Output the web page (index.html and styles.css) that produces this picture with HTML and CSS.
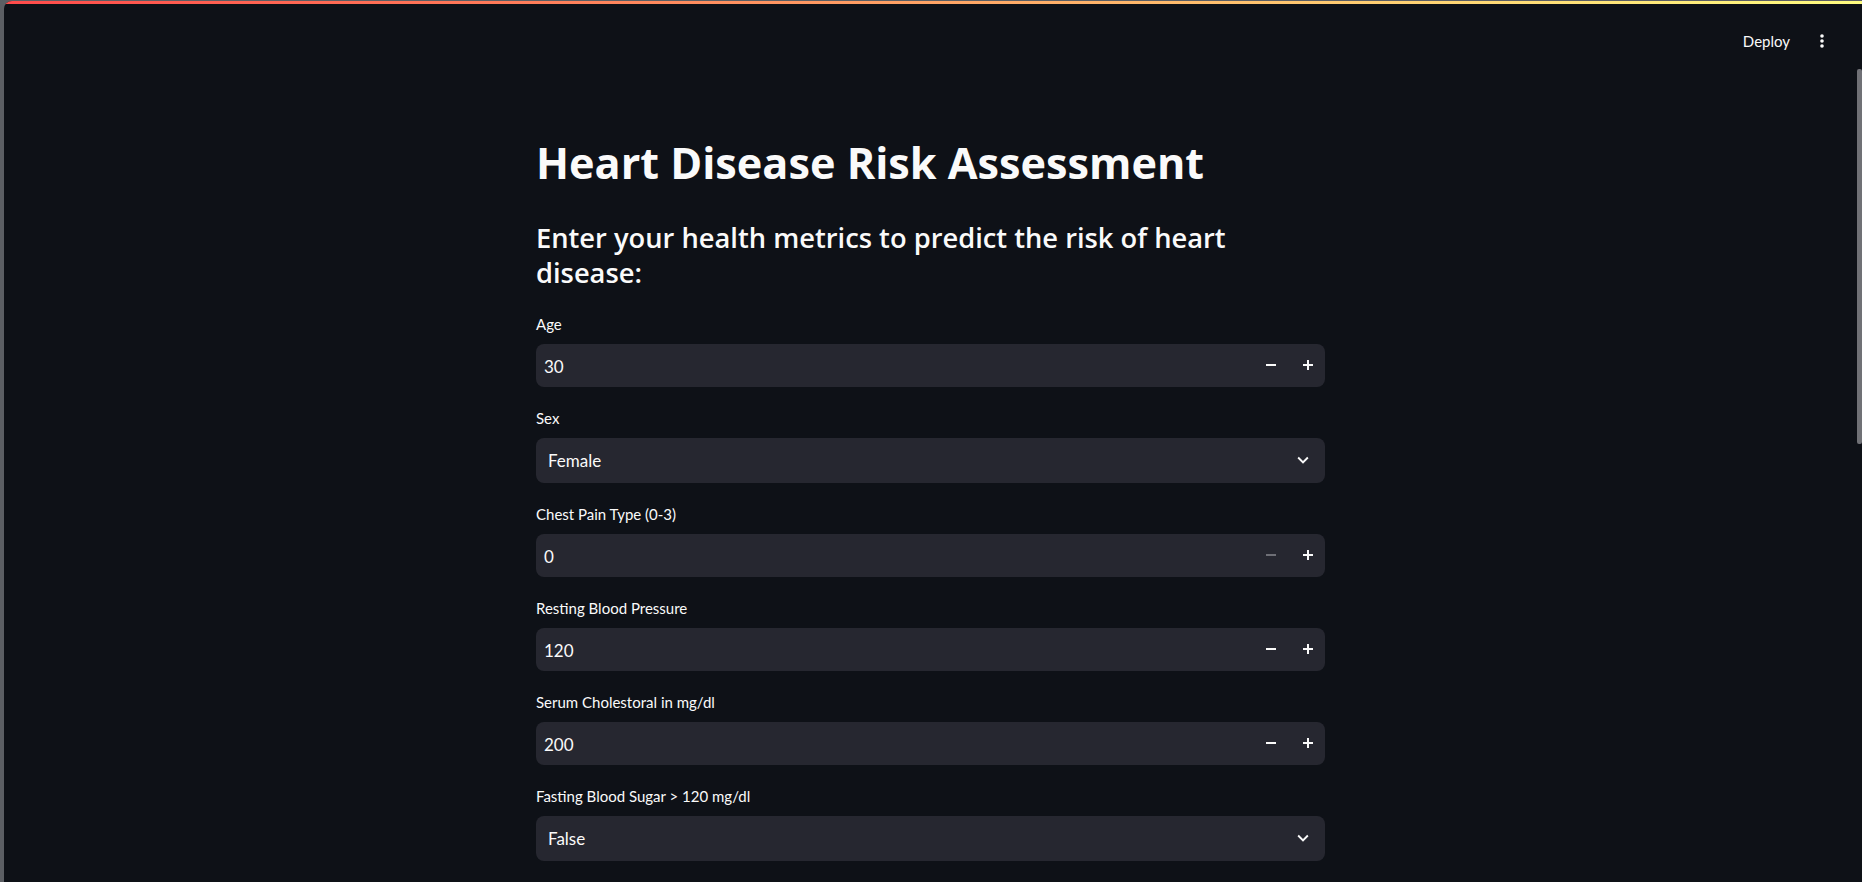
FILE: index.html
```html
<!DOCTYPE html>
<html lang="en">
<head>
<meta charset="utf-8">
<title>Heart Disease Risk Assessment</title>
<link rel="stylesheet" href="styles.css">
</head>
<body>
<div class="app">
  <div class="decoration"></div>
  <header class="topbar">
    <button class="deploy">Deploy</button>
    <button class="menu" aria-label="Main menu">
      <svg width="4" height="14" viewBox="0 0 4 14"><circle cx="2" cy="2" r="1.8" fill="#fafafa"/><circle cx="2" cy="7" r="1.8" fill="#fafafa"/><circle cx="2" cy="12" r="1.8" fill="#fafafa"/></svg>
    </button>
  </header>
  <main class="main">
    <div class="block">
      <h1 class="title">Heart Disease Risk Assessment</h1>
      <h3 class="subtitle">Enter your health metrics to predict the risk of heart<br>disease:</h3>
      <div class="widgets">
        <div class="widget">
          <label class="wlabel">Age</label>
          <div class="numinput">
            <span class="val">30</span>
            <div class="steps">
              <span class="step"><svg width="10" height="10" viewBox="0 0 10 10"><rect x="0" y="4" width="10" height="2" fill="currentColor"/></svg></span>
              <span class="step"><svg width="10" height="10" viewBox="0 0 10 10"><rect x="0" y="4" width="10" height="2" fill="currentColor"/><rect x="4" y="0" width="2" height="10" fill="currentColor"/></svg></span>
            </div>
          </div>
        </div>
        <div class="widget">
          <label class="wlabel">Sex</label>
          <div class="select">
            <span class="selval">Female</span>
            <svg class="chev" width="22" height="22" viewBox="0 0 24 24"><path d="M16.59 8.59L12 13.17 7.41 8.59 6 10l6 6 6-6z" fill="#fafafa"/></svg>
          </div>
        </div>
        <div class="widget">
          <label class="wlabel">Chest Pain Type (0-3)</label>
          <div class="numinput">
            <span class="val">0</span>
            <div class="steps">
              <span class="step disabled"><svg width="10" height="10" viewBox="0 0 10 10"><rect x="0" y="4" width="10" height="2" fill="currentColor"/></svg></span>
              <span class="step"><svg width="10" height="10" viewBox="0 0 10 10"><rect x="0" y="4" width="10" height="2" fill="currentColor"/><rect x="4" y="0" width="2" height="10" fill="currentColor"/></svg></span>
            </div>
          </div>
        </div>
        <div class="widget">
          <label class="wlabel">Resting Blood Pressure</label>
          <div class="numinput">
            <span class="val">120</span>
            <div class="steps">
              <span class="step"><svg width="10" height="10" viewBox="0 0 10 10"><rect x="0" y="4" width="10" height="2" fill="currentColor"/></svg></span>
              <span class="step"><svg width="10" height="10" viewBox="0 0 10 10"><rect x="0" y="4" width="10" height="2" fill="currentColor"/><rect x="4" y="0" width="2" height="10" fill="currentColor"/></svg></span>
            </div>
          </div>
        </div>
        <div class="widget">
          <label class="wlabel">Serum Cholestoral in mg/dl</label>
          <div class="numinput">
            <span class="val">200</span>
            <div class="steps">
              <span class="step"><svg width="10" height="10" viewBox="0 0 10 10"><rect x="0" y="4" width="10" height="2" fill="currentColor"/></svg></span>
              <span class="step"><svg width="10" height="10" viewBox="0 0 10 10"><rect x="0" y="4" width="10" height="2" fill="currentColor"/><rect x="4" y="0" width="2" height="10" fill="currentColor"/></svg></span>
            </div>
          </div>
        </div>
        <div class="widget">
          <label class="wlabel">Fasting Blood Sugar &gt; 120 mg/dl</label>
          <div class="select">
            <span class="selval">False</span>
            <svg class="chev" width="22" height="22" viewBox="0 0 24 24"><path d="M16.59 8.59L12 13.17 7.41 8.59 6 10l6 6 6-6z" fill="#fafafa"/></svg>
          </div>
        </div>
      </div>
    </div>
  </main>
  <div class="scrollthumb"></div>
</div>
</body>
</html>
```
FILE: styles.css
```css
html, body {
  margin: 0;
  padding: 0;
  height: 100%;
}
body {
  background: #5c5f64;
  overflow: hidden;
  font-family: Lato, "Liberation Sans", sans-serif;
  color: #fafafa;
}
.app {
  position: relative;
  margin: 1px 0 0 4px;
  height: 881px;
  background: #0e1117;
  border-top-left-radius: 8px;
  overflow: hidden;
}
.decoration {
  height: 3px;
  background: linear-gradient(90deg, #ff4b4b, #fffd80);
}
.topbar {
  height: 74px;
  display: flex;
  align-items: center;
  justify-content: flex-end;
  gap: 30px;
  padding-right: 38px;
}
.deploy {
  background: none;
  border: none;
  padding: 0;
  color: #fafafa;
  font-family: Lato, "Liberation Sans", sans-serif;
  font-size: 15px;
  line-height: 20px;
}
.menu {
  background: none;
  border: none;
  padding: 0;
  display: flex;
  align-items: center;
}
.main {
  display: flex;
  justify-content: center;
  padding-right: 5px;
  padding-top: 59px;
}
.block {
  width: 789px;
}
.title {
  margin: 0;
  font-family: "Open Sans", Lato, sans-serif;
  font-size: 43.2px;
  line-height: 51.6px;
  font-weight: 700;
  color: #fafafa;
}
.subtitle {
  margin: 31px 0 23px;
  font-family: "Open Sans", Lato, sans-serif;
  font-size: 27.3px;
  line-height: 35.6px;
  font-weight: 600;
  color: #fafafa;
}
.widgets {
  display: flex;
  flex-direction: column;
  gap: 21px;
}
.widget {
  display: flex;
  flex-direction: column;
}
.wlabel {
  font-size: 15px;
  line-height: 21px;
  margin-bottom: 9px;
  color: #fafafa;
}
.numinput {
  height: 43px;
  background: #262730;
  border-radius: 8px;
  display: flex;
  align-items: center;
  padding-left: 8px;
}
.val {
  flex: 1;
  font-size: 17px;
  padding-top: 2px;
}
.steps {
  display: flex;
  align-items: center;
  gap: 27px;
  padding-right: 12px;
}
.step {
  display: flex;
  color: #fafafa;
}
.step.disabled {
  color: #6e6f76;
}
.select {
  height: 45px;
  background: #262730;
  border-radius: 8px;
  display: flex;
  align-items: center;
  padding-left: 12px;
  padding-right: 11px;
}
.selval {
  flex: 1;
  font-size: 17px;
}
.chev {
  display: block;
}
.scrollthumb {
  position: absolute;
  right: 0;
  top: 68px;
  width: 5px;
  height: 375px;
  background: #707176;
  border-radius: 2px;
}
```
